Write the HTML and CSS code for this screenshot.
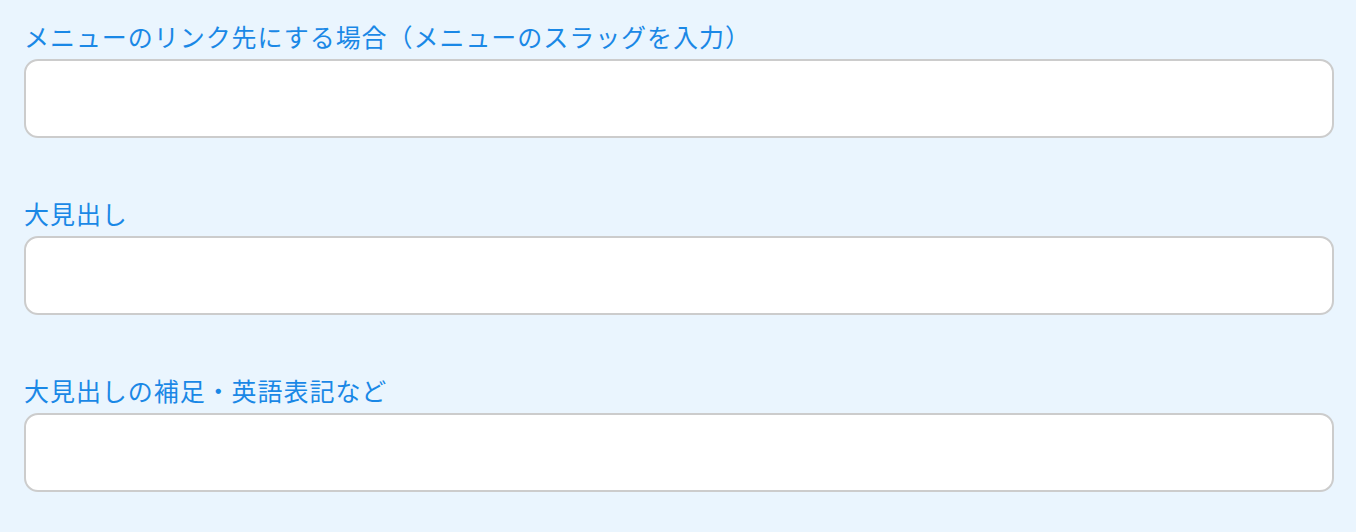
FILE: index.html
```html
<!DOCTYPE html>
<html lang="ja">
<head>
<meta charset="utf-8">
<link rel="stylesheet" href="styles.css">
</head>
<body>
<form class="form">
  <div class="field">
    <label class="label" for="f1">メニューのリンク先にする場合（メニューのスラッグを入力）</label>
    <input class="input" id="f1" type="text">
  </div>
  <div class="field">
    <label class="label" for="f2">大見出し</label>
    <input class="input" id="f2" type="text">
  </div>
  <div class="field">
    <label class="label" for="f3">大見出しの補足・英語表記など</label>
    <input class="input" id="f3" type="text">
  </div>
</form>
</body>
</html>
```
FILE: styles.css
```css
html, body {
  margin: 0;
  padding: 0;
  background: #eaf5fe;
}
.form {
  padding: 18px 22px 0 24px;
  display: flex;
  flex-direction: column;
  gap: 56px;
}
.field {
  display: flex;
  flex-direction: column;
  gap: 5px;
}
.label {
  display: block;
  font-family: "Noto Sans CJK JP", "Noto Sans", sans-serif;
  font-size: 25px;
  line-height: 36px;
  letter-spacing: 0.95px;
  color: #1a88e6;
}
.input {
  box-sizing: border-box;
  width: 100%;
  height: 79px;
  margin: 0;
  border: 2px solid #cccccc;
  border-radius: 14px;
  background: #ffffff;
  font-size: 24px;
  padding: 0 16px;
  outline: none;
}
.field + .field {
  margin-top: 1px;
}
```
